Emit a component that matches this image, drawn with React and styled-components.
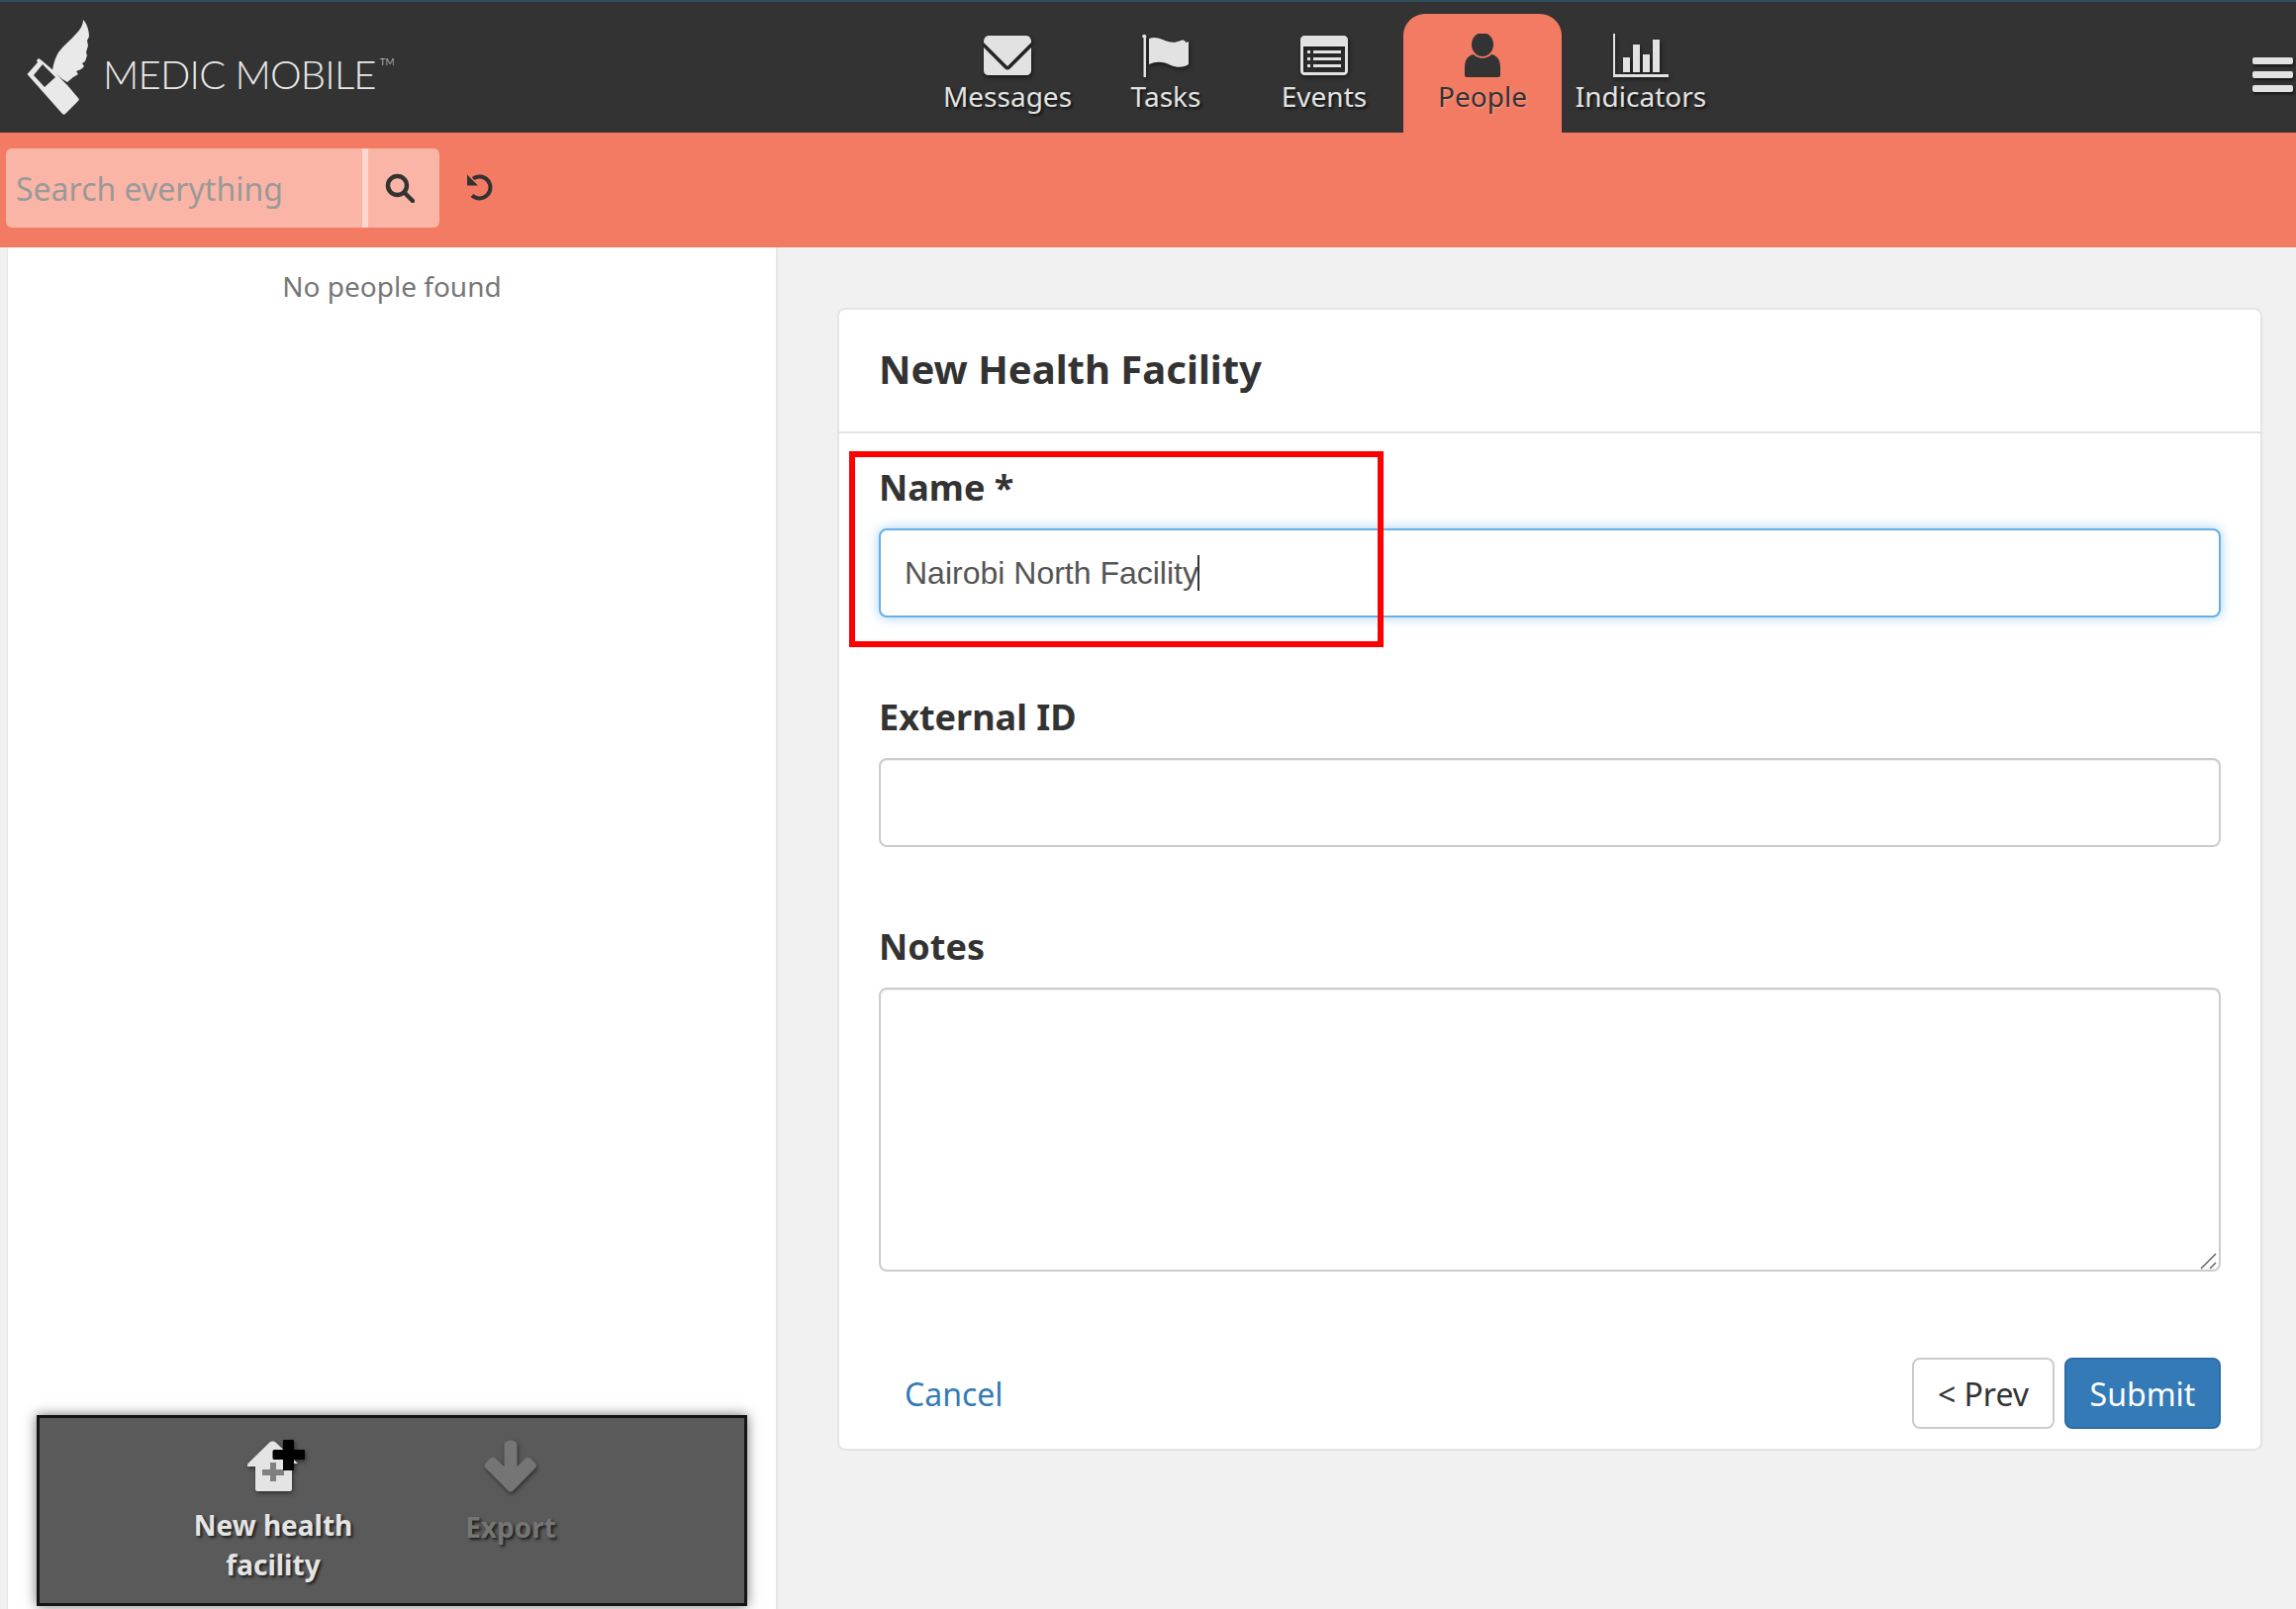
import React from 'react';
import styled, { createGlobalStyle } from 'styled-components';

const GlobalStyle = createGlobalStyle`
  html, body {
    margin: 0;
    padding: 0;
    height: 100%;
    background: #f1f1f1;
  }
  * {
    box-sizing: border-box;
  }
`;

const Page = styled.div`
  width: 2320px;
  height: 1626px;
  overflow: hidden;
  display: flex;
  flex-direction: column;
  font-family: 'Noto Sans', 'Open Sans', sans-serif;
  color: #333;
`;

const Header = styled.header`
  height: 134px;
  flex: none;
  display: flex;
  background: #333;
  border-top: 2px solid #2f4d5c;
`;

const Logo = styled.div`
  width: 938px;
  flex: none;
  display: flex;
  align-items: flex-start;
  padding: 18px 0 0 26px;
  color: #e9e9e9;
`;

const LogoText = styled.span`
  margin: 33px 0 0 12px;
  font-family: 'Lato', sans-serif;
  font-weight: 300;
  font-size: 40px;
  line-height: 44px;
  letter-spacing: -0.8px;
  white-space: nowrap;
  sup {
    font-size: 10px;
    line-height: 0;
    vertical-align: 24px;
    margin-left: 4px;
    letter-spacing: 0;
  }
`;

const Nav = styled.nav`
  display: flex;
  align-items: flex-end;
  height: 100%;
`;

const NavItem = styled.a`
  width: 160px;
  height: 120px;
  display: flex;
  flex-direction: column;
  align-items: center;
  padding-top: 20px;
  border-radius: 22px 22px 0 0;
  background: ${p => (p.$active ? '#f47b63' : 'transparent')};
  color: ${p => (p.$active ? '#333' : '#e2e2e2')};
  font-size: 28px;
  line-height: 40px;
  text-shadow: ${p => (p.$active ? '1px 1px 2px rgba(255,255,255,.25)' : '2px 2px 3px rgba(0,0,0,.7)')};
  svg {
    display: block;
    height: 44px;
    flex: none;
    filter: ${p => (p.$active ? 'none' : 'drop-shadow(1px 2px 2px rgba(0,0,0,.6))')};
  }
  span {
    margin-top: -1px;
  }
`;

const Burger = styled.button`
  margin-left: auto;
  margin-right: 3px;
  align-self: flex-start;
  margin-top: 56px;
  width: 41px;
  padding: 0;
  border: 0;
  background: none;
  display: flex;
  flex-direction: column;
  gap: 7px;
  i {
    display: block;
    height: 7px;
    border-radius: 2px;
    background: #e2e2e2;
    box-shadow: 1px 2px 3px rgba(0,0,0,.6);
  }
`;

const Toolbar = styled.div`
  height: 116px;
  flex: none;
  display: flex;
  align-items: flex-start;
  padding: 16px 0 0 6px;
  background: #f47b63;
`;

const SearchBox = styled.div`
  width: 438px;
  height: 80px;
  display: flex;
  border-radius: 6px;
  background: #fbb5a7;
  overflow: hidden;
`;

const SearchInput = styled.input`
  width: 360px;
  padding: 0 0 0 10px;
  border: 0;
  outline: 0;
  background: transparent;
  font-family: inherit;
  font-size: 32px;
  color: #333;
  &::placeholder {
    color: #999;
    opacity: 1;
  }
`;

const SearchButton = styled.button`
  flex: 1;
  border: 0;
  border-left: 6px solid #fdd6cd;
  padding: 0 8px 0 0;
  background: transparent;
  color: #333;
  display: flex;
  align-items: center;
  justify-content: center;
`;

const ResetButton = styled.button`
  margin: 25px 0 0 27px;
  padding: 0;
  border: 0;
  background: none;
  color: #333;
  display: flex;
`;

const Body = styled.div`
  flex: 1;
  display: flex;
  min-height: 0;
`;

const ListPane = styled.aside`
  width: 779px;
  flex: none;
  margin-left: 7px;
  display: flex;
  flex-direction: column;
  background: #fff;
  border-left: 1px solid #e4e4e4;
  border-right: 2px solid #e6e6e6;
`;

const EmptyNote = styled.p`
  margin: 0;
  padding-top: 19px;
  text-align: center;
  color: #777;
  font-size: 28px;
  line-height: 40px;
`;

const ActionBar = styled.div`
  margin: auto 29px 3px 29px;
  height: 193px;
  flex: none;
  display: flex;
  justify-content: center;
  background: #5a5a5a;
  border: 3px solid #151515;
  box-shadow: 0 0 12px rgba(0,0,0,.55);
`;

const Action = styled.div`
  width: 240px;
  display: flex;
  flex-direction: column;
  align-items: center;
  padding-top: 22px;
  text-align: center;
  font-weight: 700;
  font-size: 28px;
  line-height: 40px;
  color: ${p => (p.$disabled ? '#757575' : '#e4e4e4')};
  text-shadow: 2px 2px 3px rgba(0,0,0,.7);
  svg {
    display: block;
    flex: none;
    height: 54px;
    filter: drop-shadow(1px 2px 2px rgba(0,0,0,.5));
  }
  span {
    margin-top: ${p => (p.$disabled ? '14px' : '12px')};
  }
`;

const Content = styled.main`
  flex: 1;
  padding: 61px 34px 0 60px;
`;

const Card = styled.section`
  position: relative;
  height: 1155px;
  background: #fff;
  border: 2px solid #e4e4e4;
  border-radius: 8px;
`;

const CardHeader = styled.div`
  height: 125px;
  padding: 0 0 3px 40px;
  display: flex;
  align-items: center;
  border-bottom: 2px solid #e4e4e4;
`;

const Title = styled.h1`
  margin: 0;
  font-size: 40px;
  font-weight: 700;
  line-height: 50px;
  color: #333;
`;

const Form = styled.div`
  padding: 30px 40px 0 40px;
`;

const Field = styled.div`
  margin-bottom: 76px;
`;

const Label = styled.label`
  display: block;
  height: 50px;
  margin-bottom: 16px;
  font-size: 36px;
  font-weight: 700;
  line-height: 50px;
  color: #333;
`;

const TextBox = styled.div`
  height: 90px;
  padding: 0 24px;
  display: flex;
  align-items: center;
  background: #fff;
  border: 2px solid ${p => (p.$focused ? '#66afe9' : '#ccc')};
  border-radius: 8px;
  box-shadow: ${p => (p.$focused ? '0 0 12px rgba(102,175,233,.6)' : 'inset 0 1px 1px rgba(0,0,0,.075)')};
  font-family: 'Liberation Sans', Arial, sans-serif;
  font-size: 32px;
  color: #555;
`;

const Caret = styled.i`
  display: block;
  width: 2px;
  height: 36px;
  margin-left: -1px;
  background: #333;
`;

const NotesWrap = styled.div`
  position: relative;
`;

const Notes = styled.textarea`
  display: block;
  width: 100%;
  height: 287px;
  border: 2px solid #ccc;
  border-radius: 8px;
  box-shadow: inset 0 1px 1px rgba(0,0,0,.075);
  outline: 0;
  resize: none;
`;

const Grip = styled.svg`
  position: absolute;
  right: 3px;
  bottom: 2px;
`;

const Footer = styled.div`
  display: flex;
  align-items: center;
  gap: 10px;
  margin-top: 87px;
`;

const CancelLink = styled.a`
  margin-right: auto;
  padding-left: 26px;
  color: #337ab7;
  font-size: 32px;
`;

const Button = styled.button`
  height: 72px;
  padding: 0;
  width: ${p => p.$width}px;
  border-radius: 8px;
  border: 2px solid ${p => (p.$primary ? '#2e6da4' : '#ccc')};
  background: ${p => (p.$primary ? '#337ab7' : '#fff')};
  color: ${p => (p.$primary ? '#fff' : '#333')};
  font-family: inherit;
  font-size: 32px;
`;

const Annotation = styled.div`
  position: absolute;
  left: 10px;
  top: 143px;
  width: 540px;
  height: 198px;
  border: 6px solid #ff0000;
  pointer-events: none;
`;

function LogoMark() {
  return (
    <svg width="66" height="98" viewBox="0 0 66 98" fill="currentColor">
      <path d="M58 0c3 3 6 9 6 17l-2 4 1 5-2 7 1 3-2 6-3 2 2 3-3 3-5 2 2 3-5 3-6 5-5-3-10-9c1-7 3-13 6-18 5-7 12-12 18-19 3-3 7-8 7-14z" />
      <path fillRule="evenodd" d="M1.500 55L12 43l-1-2 2-2 3 2 14 12 6 7 6 6 11 13c1 1 1 2 0 3L40 95c-1 1-2 1-3 0zM8 56l11 12 11-10-13-13z" />
    </svg>
  );
}

function EnvelopeIcon() {
  return (
    <svg width="48" viewBox="0 0 48 40" fill="currentColor">
      <path d="M0 6c0-3 2-6 5-6h38c3 0 5 3 5 6v1L24 31 0 7z" />
      <path d="M0 12l21 21c2 2 4 2 6 0l21-21v23c0 3-2 5-5 5H5c-3 0-5-2-5-5z" />
    </svg>
  );
}

function FlagIcon() {
  return (
    <svg width="48" viewBox="0 0 48 44" fill="currentColor">
      <path d="M0 3a2.2 2.2 0 1 1 4 1.300V44H1.500V4.300A2.200 2.200 0 0 1 0 3z" />
      <path d="M7 5c5-2 9-1 14 1 7 3 11 4 18 1 3-1 5 0 5 2l3-1v23c-4 3-11 4-18 1-8-4-14-4-22-1z" />
    </svg>
  );
}

function ListIcon() {
  return (
    <svg width="48" viewBox="0 0 48 40" fill="currentColor">
      <path fillRule="evenodd" d="M4 0h40c2 0 4 2 4 4v32c0 2-2 4-4 4H4c-2 0-4-2-4-4V4c0-2 2-4 4-4zM3 11v25c0 .6.400 1 1 1h40c.6 0 1-.4 1-1V11z" />
      <path d="M7 15h3v3H7zM13 15h28v3H13zM7 22h3v3H7zM13 22h28v3H13zM7 29h3v3H7zM13 29h28v3H13z" />
    </svg>
  );
}

function PersonIcon() {
  return (
    <svg width="36" viewBox="0 0 36 44" fill="currentColor">
      <ellipse cx="18" cy="11" rx="11" ry="12" />
      <path d="M9 21c5 5 13 5 18 0 6 1 9 6 9 13v8c0 1-1 2-2 2H2c-1 0-2-1-2-2v-8c0-7 3-12 9-13z" />
    </svg>
  );
}

function BarsIcon() {
  return (
    <svg width="56" viewBox="0 0 56 44" fill="currentColor">
      <path d="M0 0h2v41h54v3H0zM10 24h7v15h-7zM20 11h7v28h-7zM30 21h7v18h-7zM40 6h7v33h-7z" />
    </svg>
  );
}

function HouseAddIcon() {
  return (
    <svg width="64" viewBox="0 0 64 54">
      <path fill="#e4e4e4" d="M28 3c2-2 5-2 7 0L57 24h-6v26c0 1-1 2-2 2H16c-1 0-2-1-2-2V27H6c0-1.500 0-2.500 1-3.500z" />
      <path fill="#808080" d="M29 23h6v7h8v6h-8v6h-6v-6h-8v-6h8z" />
      <path fill="#000" d="M42 1c0-1 1-1 2-1h7c1 0 2 0 2 1v9h10c1 0 1 1 1 2v6c0 1 0 2-1 2H53v10c0 1-1 1-2 1h-7c-1 0-2 0-2-1V20h-9c-1 0-1.500-1-1.500-2v-6c0-1 .5-2 1.500-2h9z" />
    </svg>
  );
}

function ArrowDownIcon() {
  return (
    <svg width="54" viewBox="0 0 54 54" fill="currentColor">
      <path d="M20.500 5c0-6 13-6 13 0v22l8-8c2-2 4-2 6 0l4 4c2 2 2 4 0 6L30 51c-2 2-4 2-6 0L2 29c-2-2-2-4 0-6l4-4c2-2 4-2 6 0l8.500 8z" />
    </svg>
  );
}

function SearchIcon() {
  return (
    <svg width="30" height="30" viewBox="0 0 30 30" fill="none" stroke="currentColor" strokeWidth="4.5">
      <circle cx="12.5" cy="12.5" r="9.5" />
      <path d="M20 20l8 8" strokeLinecap="round" />
    </svg>
  );
}

function ResetIcon() {
  return (
    <svg width="28" height="28" viewBox="0 0 28 28" fill="none" stroke="currentColor" strokeWidth="4">
      <path d="M7 5.5A11 11 0 1 1 6 22.5" />
      <path d="M1 1.5l0 11h11z" fill="currentColor" stroke="none" />
    </svg>
  );
}

export default function App() {
  return (
    <Page>
      <GlobalStyle />
      <Header>
        <Logo>
          <LogoMark />
          <LogoText>MEDIC MOBILE<sup>TM</sup></LogoText>
        </Logo>
        <Nav>
          <NavItem><EnvelopeIcon /><span>Messages</span></NavItem>
          <NavItem><FlagIcon /><span>Tasks</span></NavItem>
          <NavItem><ListIcon /><span>Events</span></NavItem>
          <NavItem $active><PersonIcon /><span>People</span></NavItem>
          <NavItem><BarsIcon /><span>Indicators</span></NavItem>
        </Nav>
        <Burger aria-label="Menu"><i /><i /><i /></Burger>
      </Header>

      <Toolbar>
        <SearchBox>
          <SearchInput placeholder="Search everything" />
          <SearchButton aria-label="Search"><SearchIcon /></SearchButton>
        </SearchBox>
        <ResetButton aria-label="Reset"><ResetIcon /></ResetButton>
      </Toolbar>

      <Body>
        <ListPane>
          <EmptyNote>No people found</EmptyNote>
          <ActionBar>
            <Action><HouseAddIcon /><span>New health<br />facility</span></Action>
            <Action $disabled><ArrowDownIcon /><span>Export</span></Action>
          </ActionBar>
        </ListPane>

        <Content>
          <Card>
            <CardHeader>
              <Title>New Health Facility</Title>
            </CardHeader>
            <Form>
              <Field>
                <Label>Name *</Label>
                <TextBox $focused>Nairobi North Facility<Caret /></TextBox>
              </Field>
              <Field>
                <Label>External ID</Label>
                <TextBox />
              </Field>
              <Field>
                <Label>Notes</Label>
                <NotesWrap>
                  <Notes />
                  <Grip width="18" height="18" viewBox="0 0 18 18" fill="none" stroke="#666" strokeWidth="1.5">
                    <path d="M1 17L16 2M10 17l6-6" />
                  </Grip>
                </NotesWrap>
              </Field>
              <Footer>
                <CancelLink>Cancel</CancelLink>
                <Button $width={144}>&lt; Prev</Button>
                <Button $primary $width={158}>Submit</Button>
              </Footer>
            </Form>
            <Annotation />
          </Card>
        </Content>
      </Body>
    </Page>
  );
}
